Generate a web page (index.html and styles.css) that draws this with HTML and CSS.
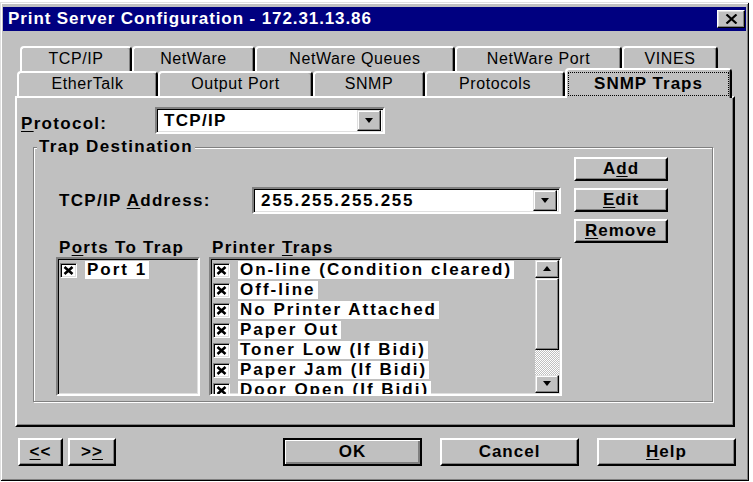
FILE: index.html
```html
<!DOCTYPE html>
<html lang="en">
<head>
    <meta charset="UTF-8">
    <title>Print Server Configuration</title>
    <link rel="stylesheet" href="styles.css">
</head>
<body>
    <div class="window">
        <div class="titlebar">
            <span class="title">Print Server Configuration - 172.31.13.86</span>
            <button class="close-btn" aria-label="Close">
                <svg width="13" height="10" viewBox="0 0 13 10"><path d="M1.5 0.5 L11.5 9.5 M11.5 0.5 L1.5 9.5" stroke="#000" stroke-width="2.2"/></svg>
            </button>
        </div>

        <!-- Property sheet tabs -->
        <div class="tabstrip">
            <div class="tab-row tab-row-back">
                <div class="tab">TCP/IP</div>
                <div class="tab">NetWare</div>
                <div class="tab">NetWare Queues</div>
                <div class="tab">NetWare Port</div>
                <div class="tab">VINES</div>
            </div>
            <div class="tab-row tab-row-front">
                <div class="tab">EtherTalk</div>
                <div class="tab">Output Port</div>
                <div class="tab">SNMP</div>
                <div class="tab">Protocols</div>
                <div class="tab tab-active"><span class="tab-focus">SNMP Traps</span></div>
            </div>
        </div>

        <div class="panel">
            <div class="protocol-row">
                <span class="field-label protocol-label"><u>P</u>rotocol:</span>
                <div class="combo protocol-combo">
                    <span class="combo-value">TCP/IP</span>
                    <span class="combo-btn">
                        <svg width="10" height="6" viewBox="0 0 10 6"><path d="M1 0 H9 L5 5 Z" fill="#000"/></svg>
                    </span>
                </div>
            </div>

            <div class="group">
                <span class="group-legend">Trap Destination</span>

                <div class="group-main">
                    <div class="address-row">
                        <span class="field-label address-label">TCP/IP <u>A</u>ddress:</span>
                        <div class="combo address-combo">
                            <span class="combo-value address-value">255.255.255.255</span>
                            <span class="combo-btn">
                                <svg width="10" height="6" viewBox="0 0 10 6"><path d="M1 0 H9 L5 5 Z" fill="#000"/></svg>
                            </span>
                        </div>
                    </div>

                    <div class="lists">
                        <div class="list-col ports-col">
                            <div class="list-label">P<u>o</u>rts To Trap</div>
                            <div class="listbox">
                                <div class="list-items">
                                    <div class="item"><span class="check"><svg width="11" height="9" viewBox="0 0 11 9"><path d="M1.5 1 L9.5 8 M9.5 1 L1.5 8" stroke="#000" stroke-width="2.6"/></svg></span><span class="item-text">Port 1</span></div>
                                </div>
                            </div>
                        </div>

                        <div class="list-col traps-col">
                            <div class="list-label">Printer <u>T</u>raps</div>
                            <div class="listbox">
                                <div class="list-items">
                                    <div class="item"><span class="check"><svg width="11" height="9" viewBox="0 0 11 9"><path d="M1.5 1 L9.5 8 M9.5 1 L1.5 8" stroke="#000" stroke-width="2.6"/></svg></span><span class="item-text">On-line (Condition cleared)</span></div>
                                    <div class="item"><span class="check"><svg width="11" height="9" viewBox="0 0 11 9"><path d="M1.5 1 L9.5 8 M9.5 1 L1.5 8" stroke="#000" stroke-width="2.6"/></svg></span><span class="item-text">Off-line</span></div>
                                    <div class="item"><span class="check"><svg width="11" height="9" viewBox="0 0 11 9"><path d="M1.5 1 L9.5 8 M9.5 1 L1.5 8" stroke="#000" stroke-width="2.6"/></svg></span><span class="item-text">No Printer Attached</span></div>
                                    <div class="item"><span class="check"><svg width="11" height="9" viewBox="0 0 11 9"><path d="M1.5 1 L9.5 8 M9.5 1 L1.5 8" stroke="#000" stroke-width="2.6"/></svg></span><span class="item-text">Paper Out</span></div>
                                    <div class="item"><span class="check"><svg width="11" height="9" viewBox="0 0 11 9"><path d="M1.5 1 L9.5 8 M9.5 1 L1.5 8" stroke="#000" stroke-width="2.6"/></svg></span><span class="item-text">Toner Low (If Bidi)</span></div>
                                    <div class="item"><span class="check"><svg width="11" height="9" viewBox="0 0 11 9"><path d="M1.5 1 L9.5 8 M9.5 1 L1.5 8" stroke="#000" stroke-width="2.6"/></svg></span><span class="item-text">Paper Jam (If Bidi)</span></div>
                                    <div class="item"><span class="check"><svg width="11" height="9" viewBox="0 0 11 9"><path d="M1.5 1 L9.5 8 M9.5 1 L1.5 8" stroke="#000" stroke-width="2.6"/></svg></span><span class="item-text">Door Open (If Bidi)</span></div>
                                </div>
                                <div class="scrollbar">
                                    <span class="scroll-btn">
                                        <svg width="10" height="6" viewBox="0 0 10 6"><path d="M1 5 H9 L5 0 Z" fill="#000"/></svg>
                                    </span>
                                    <span class="scroll-thumb"></span>
                                    <span class="scroll-track"></span>
                                    <span class="scroll-btn">
                                        <svg width="10" height="6" viewBox="0 0 10 6"><path d="M1 0 H9 L5 5 Z" fill="#000"/></svg>
                                    </span>
                                </div>
                            </div>
                        </div>
                    </div>
                </div>

                <div class="group-buttons">
                    <button class="btn">A<u>d</u>d</button>
                    <button class="btn"><u>E</u>dit</button>
                    <button class="btn"><u>R</u>emove</button>
                </div>
            </div>
        </div>

        <div class="footer">
            <div class="nav-buttons">
                <button class="btn btn-prev"><u>&lt;</u>&lt;</button>
                <button class="btn btn-next">&gt;<u>&gt;</u></button>
            </div>
            <div class="dialog-buttons">
                <button class="btn btn-default">OK</button>
                <button class="btn">Cancel</button>
                <button class="btn"><u>H</u>elp</button>
            </div>
        </div>
    </div>
</body>
</html>
```

FILE: styles.css
```css
* {
    margin: 0;
    padding: 0;
    box-sizing: border-box;
}

body {
    background: #ffffff;
    font-family: "Liberation Sans", Arial, sans-serif;
    color: #000;
}

u {
    text-decoration-thickness: 1px;
    text-underline-offset: 2px;
}

/* Window frame */
.window {
    width: 749px;
    height: 479px;
    margin-top: 2px;
    padding: 5px 3px 0 3px;
    background: #c0c0c0;
    box-shadow: inset 1px 1px #dfdfdf, inset -1px -1px #000,
                inset 2px 2px #fff, inset -2px -2px #808080;
    display: flex;
    flex-direction: column;
}

.titlebar {
    height: 24px;
    background: #000080;
    display: flex;
    align-items: center;
    justify-content: space-between;
    padding: 0 1px 0 5px;
}

.title {
    color: #fff;
    font-weight: bold;
    font-size: 17px;
    letter-spacing: 0.9px;
}

.close-btn {
    width: 28px;
    height: 18px;
    background: #c0c0c0;
    border: 1px solid;
    border-color: #fff #000 #000 #fff;
    box-shadow: inset -1px -1px #808080, inset 1px 1px #dfdfdf;
    display: flex;
    align-items: center;
    justify-content: center;
}

/* Tabs */
.tabstrip {
    margin-top: 15px;
}

.tab-row {
    display: grid;
    height: 25px;
}

.tab-row-back {
    margin-left: 17px;
    grid-template-columns: 112px 123px 200px 167px 96px;
}

.tab-row-front {
    margin-left: 14px;
    grid-template-columns: 141px 155px 112px 140px 167px;
}

.tab {
    font-size: 16px;
    letter-spacing: 0.6px;
    line-height: 22px;
    text-align: center;
    background: #c0c0c0;
    border-top: 2px solid #fff;
    border-left: 2px solid #fff;
    border-right: 2px solid #000;
    box-shadow: inset -1px 0 #808080;
    border-radius: 4px 4px 0 0;
}

.tab-active {
    position: relative;
    z-index: 1;
    height: 30px;
    margin-top: -3px;
    padding: 2px 1px 0 1px;
    font-weight: bold;
    font-size: 17px;
    letter-spacing: 1px;
}

.tab-focus {
    display: block;
    height: 24px;
    line-height: 22px;
    border: 1px dotted #000;
}

/* Page body */
.panel {
    margin-left: 12px;
    width: 720px;
    height: 331px;
    border: 2px solid;
    border-color: #fff #000 #000 #fff;
    box-shadow: inset -1px -1px #808080;
    padding: 9px 0 0 4px;
}

.field-label,
.list-label,
.combo-value,
.item-text,
.group-legend,
.btn {
    font-weight: bold;
    font-size: 17px;
    letter-spacing: 1.3px;
}

.protocol-row,
.address-row {
    display: flex;
    align-items: center;
    height: 27px;
}

.protocol-label {
    width: 134px;
    padding-top: 6px;
}

.address-label {
    width: 196px;
    padding-left: 3px;
}

.combo {
    height: 27px;
    background: #fff;
    border: 2px solid;
    border-color: #808080 #fff #fff #808080;
    box-shadow: inset 1px 1px #000, inset -1px -1px #dfdfdf;
    display: flex;
    align-items: center;
    justify-content: space-between;
    padding: 0 2px 0 7px;
}

.protocol-combo {
    width: 230px;
}

.address-combo {
    width: 309px;
}

.combo-value {
    line-height: 20px;
}

.address-value {
    letter-spacing: 1.7px;
}

.combo-btn {
    width: 24px;
    height: 21px;
    background: #c0c0c0;
    border: 1px solid;
    border-color: #dfdfdf #000 #000 #dfdfdf;
    box-shadow: inset -1px -1px #808080, inset 1px 1px #fff;
    display: flex;
    align-items: center;
    justify-content: center;
}

/* Trap Destination group */
.group {
    position: relative;
    margin: 13px 0 0 12px;
    width: 680px;
    height: 255px;
    border: 1px solid #808080;
    box-shadow: inset 1px 1px #fff, 1px 1px #fff;
    display: grid;
    grid-template-columns: 506px 94px;
    column-gap: 12px;
    padding-left: 22px;
}

.group-legend {
    position: absolute;
    top: -10px;
    left: 3px;
    padding: 0 2px;
    background: #c0c0c0;
    line-height: 18px;
}

.group-main {
    padding-top: 39px;
}

.group-buttons {
    padding-top: 9px;
    display: flex;
    flex-direction: column;
    gap: 7px;
}

.group-buttons .btn {
    height: 24px;
}

.lists {
    margin-top: 25px;
    display: flex;
    gap: 9px;
}

.ports-col {
    width: 144px;
}

.traps-col {
    width: 353px;
}

.list-label {
    height: 18px;
    line-height: 17px;
    padding-left: 3px;
}

.listbox {
    height: 139px;
    background: #c0c0c0;
    border: 2px solid;
    border-color: #808080 #fff #fff #808080;
    box-shadow: inset 1px 1px #000, inset -1px -1px #dfdfdf;
    display: flex;
    overflow: hidden;
}

.list-items {
    flex: 1;
    padding-top: 1px;
    overflow: hidden;
}

.item {
    height: 20px;
    display: flex;
    align-items: center;
    padding-left: 2px;
}

.check {
    width: 17px;
    height: 15px;
    flex-shrink: 0;
    background: #fff;
    border: 1px solid;
    border-color: #808080 #fff #fff #808080;
    box-shadow: inset 1px 1px #000, inset -1px -1px #dfdfdf;
    display: flex;
    align-items: center;
    justify-content: center;
}

.item-text {
    margin-left: 8px;
    padding: 0 2px;
    background: #fff;
    line-height: 18px;
    letter-spacing: 2px;
    white-space: nowrap;
}

.scrollbar {
    width: 25px;
    flex-shrink: 0;
    display: flex;
    flex-direction: column;
    padding: 1px 1px 1px 0;
}

.scroll-btn,
.scroll-thumb {
    background: #c0c0c0;
    border: 1px solid;
    border-color: #dfdfdf #000 #000 #dfdfdf;
    box-shadow: inset -1px -1px #808080, inset 1px 1px #fff;
}

.scroll-btn {
    height: 18px;
    display: flex;
    align-items: center;
    justify-content: center;
}

.scroll-thumb {
    height: 72px;
}

.scroll-track {
    flex: 1;
    background: repeating-conic-gradient(#fff 0 25%, #c0c0c0 0 50%) 0 0 / 2px 2px;
}

/* Buttons */
.btn {
    font-family: "Liberation Sans", Arial, sans-serif;
    background: #c0c0c0;
    color: #000;
    border: 2px solid;
    border-color: #fff #000 #000 #fff;
    box-shadow: inset -1px -1px #808080;
    letter-spacing: 1px;
}

.btn-default {
    border-color: #000;
    box-shadow: inset 1px 1px #fff, inset -2px -2px #808080;
}

.footer {
    margin-top: 11px;
    display: flex;
    justify-content: space-between;
    padding: 0 10px 0 15px;
}

.footer .btn {
    height: 28px;
}

.nav-buttons,
.dialog-buttons {
    display: flex;
}

.nav-buttons {
    gap: 5px;
}

.dialog-buttons {
    gap: 18px;
}

.btn-prev {
    width: 45px;
}

.btn-next {
    width: 48px;
}

.dialog-buttons .btn {
    width: 139px;
}
```
